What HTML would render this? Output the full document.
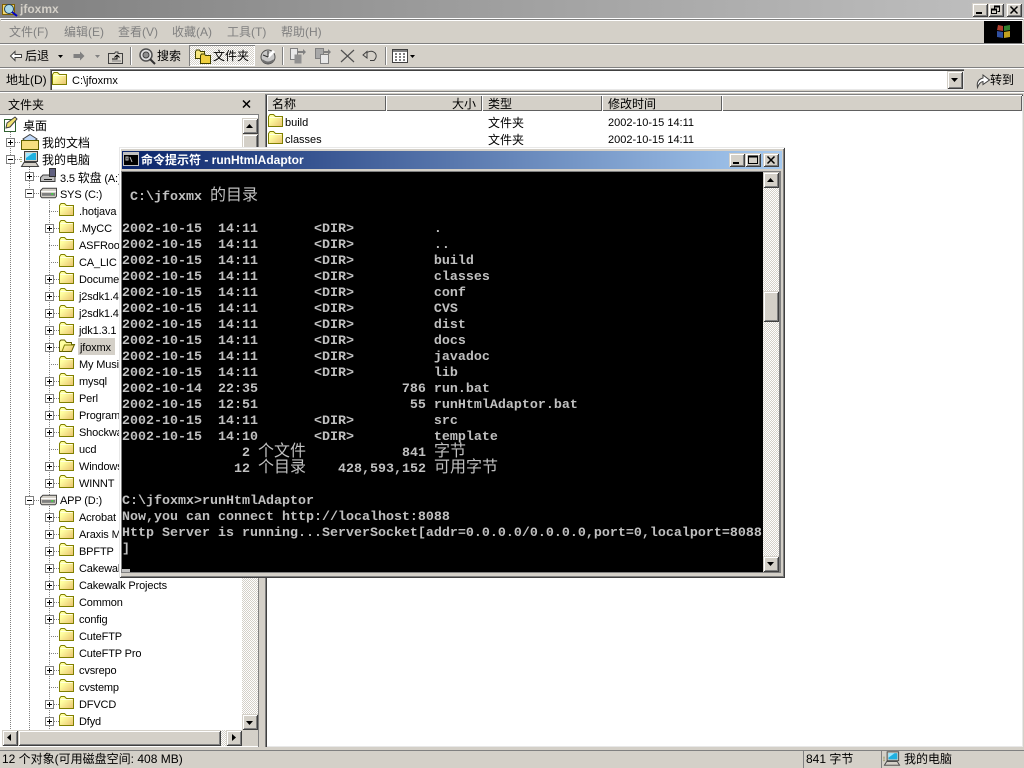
<!DOCTYPE html>
<html><head><meta charset="utf-8"><title>jfoxmx</title>
<style>
html,body{margin:0;padding:0;width:1024px;height:768px;overflow:hidden;background:#d4d0c8}
body{position:relative;font-family:"Liberation Sans","WenQuanYi Zen Hei","Noto Sans CJK SC",sans-serif;font-size:12px;color:#000}
.a,.t{position:absolute}
.t{white-space:nowrap;line-height:16px;height:16px}
svg{position:absolute;overflow:visible}
symbol{overflow:visible}
.up{background:#d4d0c8;box-shadow:inset 1px 1px #d4d0c8,inset -1px -1px #404040,inset 2px 2px #fff,inset -2px -2px #808080}
.hd{background:#d4d0c8;box-shadow:inset 1px 1px #fff,inset -1px -1px #606060;position:absolute;height:16px;top:95px}
.ck{background:repeating-conic-gradient(#fff 0 25%,#d4d0c8 0 50%) 0 0/2px 2px}
.m{color:#808080;top:24px}
.hl{background:#808080}.sh{background:#fff}
.pl{position:absolute;width:9px;height:9px;box-sizing:border-box;border:1px solid #808080;background:#fff}
.pl:before{content:"";position:absolute;left:1px;top:3px;width:5px;height:1px;background:#000}
.pl.p:after{content:"";position:absolute;left:3px;top:1px;width:1px;height:5px;background:#000}
.v{position:absolute;width:1px;background:repeating-linear-gradient(#808080 0 1px,transparent 1px 2px)}
.h{position:absolute;height:1px;background:repeating-linear-gradient(90deg,#808080 0 1px,transparent 1px 2px)}
.t[style*="left:79px"],.t[style*="left:80px"],.t[style*="left:60px"]{margin-top:1px;letter-spacing:-.15px}
pre{position:absolute;left:122px;top:172px;width:641px;height:398px;padding-top:2px;margin:0;background:#000;color:#c0c0c0;font:bold 13.334px/16px "Liberation Mono",monospace;overflow:hidden}
pre span{font:400 16px/0 "WenQuanYi Zen Hei","Noto Sans CJK SC",sans-serif}
</style></head><body>
<svg width="0" height="0" style="position:absolute"><defs>
<linearGradient id="fg" x1="0" y1="0" x2="1" y2="1"><stop offset=".3" stop-color="#ffffa0"/><stop offset="1" stop-color="#e8c070"/></linearGradient>
<symbol id="f" viewBox="0 2 15 14"><path d="M.5 3.500V13.500H14.500V3.500H7.500L5.500 1.500H2L.5 3.500Z" fill="url(#fg)" stroke="#808000"/><path d="M1.500 4.500H13.500" stroke="#ffffe0"/></symbol>
<symbol id="fo" viewBox="0 2 16 14"><path d="M.5 3.500V13.500H12.500L15.500 6.500H12.500V4.500H7.500L5.500 2H2Z" fill="url(#fg)" stroke="#606000"/><path d="M3 13.500L5.500 7H15" fill="none" stroke="#808000"/></symbol>
<symbol id="pc" viewBox="0 0 18 16"><rect x="3.500" y=".5" width="13" height="10" fill="#d4d0c8" stroke="#404040"/><rect x="5" y="2" width="10" height="7" fill="#20b0e0"/><path d="M5 2H12L5 7Z" fill="#a0e8ff"/><path d="M.5 15.500L3 11.500H15L17.500 15.500Z" fill="#d4d0c8" stroke="#404040"/><path d="M0 6V12" stroke="#606000" stroke-dasharray="1 1"/></symbol>
<symbol id="dr" viewBox="0 0 18 12"><path d="M.5 3.500L3 1H17.500V9.500L16 11H2L.5 9.500Z" fill="#d4d0c8" stroke="#404040"/><path d="M1 4.500H17" stroke="#fff"/><rect x="2" y="6" width="14" height="3" fill="#808080"/><rect x="12" y="6" width="2" height="2" fill="#40d040"/></symbol>
</defs></svg>

<!-- main title bar -->
<div class="a" style="left:0;top:0;width:1024px;height:18px;background:linear-gradient(90deg,#808080,#c0c0c0)"></div>
<svg style="left:2px;top:2px" width="16" height="15"><rect x=".5" y="2.500" width="12" height="10" fill="#f0d870" stroke="#806000"/><circle cx="7" cy="7" r="4.500" fill="#a8d8e8" stroke="#204060"/><path d="M10 10L15 14" stroke="#0000c0" stroke-width="2"/></svg>
<div class="t" style="left:20px;top:1px;color:#d4d0c8;font-weight:bold;font-size:12px">jfoxmx</div>
<div class="a up" style="left:972px;top:3px;width:16px;height:14px"></div>
<div class="a" style="left:976px;top:12px;width:6px;height:2px;background:#000"></div>
<div class="a up" style="left:988px;top:3px;width:16px;height:14px"></div>
<svg style="left:988px;top:3px" width="16" height="14"><path d="M6.500 3.500H11.500V8.500H9.500M6.500 3.500V5.500" fill="none" stroke="#000"/><path d="M6 3.500H12" stroke="#000" stroke-width="2"/><rect x="3.500" y="6.500" width="5" height="4" fill="none" stroke="#000"/><path d="M3 6.500H9" stroke="#000" stroke-width="2"/></svg>
<div class="a up" style="left:1006px;top:3px;width:16px;height:14px"></div>
<svg style="left:1006px;top:3px" width="16" height="14"><path d="M4.500 3.500L11.500 10.500M11.500 3.500L4.500 10.500" stroke="#000" stroke-width="1.500"/></svg>
<div class="a" style="left:0;top:18px;width:1024px;height:1px;background:#fff"></div>

<!-- menu -->
<div class="a hl" style="left:1px;top:19px;width:1022px;height:1px"></div>
<div class="a sh" style="left:1px;top:20px;width:1022px;height:1px"></div>
<div class="t m" style="left:9px">文件(F)</div>
<div class="t m" style="left:64px">编辑(E)</div>
<div class="t m" style="left:118px">查看(V)</div>
<div class="t m" style="left:172px">收藏(A)</div>
<div class="t m" style="left:227px">工具(T)</div>
<div class="t m" style="left:281px">帮助(H)</div>
<div class="a" style="left:984px;top:21px;width:38px;height:22px;background:#000"></div>
<svg style="left:995px;top:24px" width="18" height="15"><path d="M3 1L8 2V7L2 6Z" fill="#b04030"/><path d="M9 2L15 1V6L9 7Z" fill="#308030"/><path d="M2 7L8 8V14L2 13Z" fill="#3050a0"/><path d="M9 8L15 7V13L9 14Z" fill="#c0a020"/></svg>
<div class="a hl" style="left:0;top:43px;width:1024px;height:1px"></div>
<div class="a sh" style="left:0;top:44px;width:1024px;height:1px"></div>

<!-- toolbar -->
<svg style="left:9px;top:50px" width="13" height="12"><path d="M6 1.500L1.500 6L6 10.500V7.500H12.500V4.500H6Z" fill="#fff" stroke="#404040"/></svg>
<div class="t" style="left:25px;top:48px">后退</div>
<svg style="left:58px;top:55px" width="6" height="4"><path d="M0 0H5L2.500 3Z" fill="#000"/></svg>
<svg style="left:73px;top:50px" width="13" height="12"><path d="M7 1.500L11.500 6L7 10.500V8H.5V4H7Z" fill="#808080"/></svg>
<svg style="left:95px;top:55px" width="6" height="4"><path d="M0 0H5L2.500 3Z" fill="#808080"/></svg>
<svg style="left:108px;top:50px" width="16" height="14"><path d="M.5 3.500H6.500L7.500 2H10V3.500H14.500V13.500H.5Z" fill="#d4d0c8" stroke="#404040"/><path d="M4 9H9V6M9 5L6.500 7.500M9 5L11.500 7.500" fill="none" stroke="#000"/><path d="M4 11H13" stroke="#808080"/></svg>
<div class="a hl" style="left:130px;top:47px;width:1px;height:18px"></div><div class="a sh" style="left:131px;top:47px;width:1px;height:18px"></div>
<svg style="left:139px;top:48px" width="17" height="17"><circle cx="7" cy="7" r="6" fill="#e0e0e0" stroke="#505050" stroke-width="1.500"/><circle cx="7" cy="7" r="3" fill="#909090" stroke="#404040"/><path d="M11 11L16 16" stroke="#303030" stroke-width="2"/></svg>
<div class="t" style="left:157px;top:48px">搜索</div>
<div class="a ck" style="left:189px;top:45px;width:66px;height:21px;box-shadow:inset 1px 1px #808080,inset -1px -1px #fff"></div>
<svg style="left:195px;top:49px" width="16" height="15"><path d="M.5 2.500L1.500 1H4.500L5.500 2.500H9.500V9.500H.5Z" fill="#f8e880" stroke="#404000"/><path d="M5.500 6.500L6.500 5H9.500L10.500 6.500H15.500V14.500H5.500Z" fill="#f0d040" stroke="#404000"/></svg>
<div class="t" style="left:213px;top:48px">文件夹</div>
<svg style="left:260px;top:48px" width="17" height="17"><circle cx="8" cy="9" r="7" fill="#c8c8c8" stroke="#505050"/><path d="M8 9L14 3" stroke="#fff" stroke-width="3"/><path d="M8 9L3 7M8 9L8 3" stroke="#303030"/><path d="M2 12Q8 17 14 12" stroke="#707070" stroke-width="2" fill="none"/></svg>
<div class="a hl" style="left:282px;top:47px;width:1px;height:18px"></div><div class="a sh" style="left:283px;top:47px;width:1px;height:18px"></div>
<svg style="left:290px;top:48px" width="17" height="16"><rect x=".5" y=".5" width="7" height="11" fill="#e8e8e8" stroke="#808080"/><path d="M4.500 6.500H11.500V15.500H4.500Z" fill="#909090"/><path d="M8 3H13V1L16 4L13 7V5H8Z" fill="#808080"/></svg>
<svg style="left:315px;top:48px" width="17" height="16"><rect x=".5" y=".5" width="8" height="10" fill="#a8a8a8" stroke="#808080"/><rect x="5.500" y="6.500" width="8" height="9" fill="#e8e8e8" stroke="#808080"/><path d="M9 3H13V1L16 4L13 7V5H9Z" fill="#808080"/></svg>
<svg style="left:340px;top:49px" width="15" height="14"><path d="M1 1L14 13M14 1L1 13" stroke="#505050" stroke-width="1.200"/></svg>
<svg style="left:362px;top:50px" width="16" height="12"><path d="M5 2.500Q10 -.5 13.500 3.500Q15.500 7 12 10.500H8" fill="none" stroke="#404040"/><path d="M1 5L5 1.500V8Z" fill="#d4d0c8" stroke="#404040"/></svg>
<div class="a hl" style="left:385px;top:47px;width:1px;height:18px"></div><div class="a sh" style="left:386px;top:47px;width:1px;height:18px"></div>
<svg style="left:392px;top:49px" width="16" height="14"><rect x=".5" y=".5" width="15" height="13" fill="#fff" stroke="#404040"/><rect x="1" y="1" width="14" height="2" fill="#808080"/><path d="M3 5H5M3 8H5M3 11H5M7 5H9M7 8H9M7 11H9M11 5H13M11 8H13M11 11H13" stroke="#000"/></svg>
<svg style="left:410px;top:55px" width="6" height="4"><path d="M0 0H5L2.500 3Z" fill="#000"/></svg>
<div class="a hl" style="left:0;top:67px;width:1024px;height:1px"></div>
<div class="a sh" style="left:0;top:68px;width:1024px;height:1px"></div>

<!-- address -->
<div class="t" style="left:6px;top:72px">地址(D)</div>
<div class="a" style="left:50px;top:69px;width:914px;height:21px;background:#fff;box-shadow:inset 1px 1px #808080,inset 2px 2px #404040,inset -1px -1px #e8e8e8"></div>
<svg style="left:52px;top:73px" width="15" height="14"><use href="#f" width="15" height="14"/></svg>
<div class="t" style="left:72px;top:73px;font-size:11px">C:\jfoxmx</div>
<div class="a up" style="left:947px;top:71px;width:16px;height:18px"></div>
<svg style="left:951px;top:78px" width="8" height="5"><path d="M0 0H7L3.500 4Z" fill="#000"/></svg>
<svg style="left:975px;top:72px" width="16" height="17"><path d="M2.500 15.500Q1 8 8 6V3L14.500 8L8 12.500V9.500Q4.500 10 2.500 15.500Z" fill="#fff" stroke="#404040"/></svg>
<div class="t" style="left:990px;top:72px">转到</div>
<div class="a hl" style="left:0;top:91px;width:1024px;height:1px"></div>
<div class="a sh" style="left:0;top:92px;width:1024px;height:1px"></div>

<!-- left pane -->
<div class="t" style="left:8px;top:97px">文件夹</div>
<svg style="left:242px;top:100px" width="9" height="8"><path d="M1 0.500L8 7.500M8 0.500L1 7.500" stroke="#000" stroke-width="1.500"/></svg>
<div class="a" style="left:0;top:114px;width:259px;height:633px;background:#fff;box-shadow:inset 0 1px #808080,inset -1px 0 #808080"></div>
<div class="v" style="left:10px;top:130px;height:600px"></div>
<div class="v" style="left:29px;top:165px;height:565px"></div>
<div class="v" style="left:49px;top:200px;height:530px"></div>

<svg style="left:2px;top:116px" width="17" height="17"><path d="M2.500 3.500H13.500V15.500H2.500Z" fill="#fff" stroke="#306030"/><path d="M5 7L13 1L15 3L8 11L4 12Z" fill="#f0e070" stroke="#404040"/></svg>
<div class="t" style="left:23px;top:118px">桌面</div>
<div class="h" style="left:15px;top:142px;width:6px"></div><div class="pl p" style="left:6px;top:138px"></div>
<svg style="left:21px;top:134px" width="18" height="16"><path d="M9 .5L16 5L12 8H5L2 5Z" fill="#c0d8f8" stroke="#404040"/><path d="M.5 6.500H17.500V15.500H.5Z" fill="#f8e080" stroke="#606000"/></svg>
<div class="t" style="left:42px;top:135px">我的文档</div>
<div class="h" style="left:15px;top:159px;width:6px"></div><div class="pl" style="left:6px;top:155px"></div>
<svg style="left:21px;top:151px" width="18" height="16"><use href="#pc" width="18" height="16"/></svg>
<div class="t" style="left:42px;top:152px">我的电脑</div>

<div class="h" style="left:34px;top:176px;width:6px"></div><div class="pl p" style="left:25px;top:172px"></div>
<svg style="left:40px;top:168px" width="17" height="16"><path d="M.5 9.500L3 7H15V13.500H.5Z" fill="#c0c0c0" stroke="#404040"/><rect x="9.500" y=".5" width="6" height="8" fill="#606080" stroke="#303030"/><rect x="4" y="11" width="8" height="1" fill="#202020"/></svg>
<div class="t" style="left:60px;top:169px;font-size:11px">3.5 <span style="font-size:12px">软盘</span> (A:)</div>
<div class="h" style="left:34px;top:193px;width:6px"></div><div class="pl" style="left:25px;top:189px"></div>
<svg style="left:40px;top:187px" width="17" height="12"><use href="#dr" width="17" height="12"/></svg>
<div class="t" style="left:60px;top:186px;font-size:11px">SYS (C:)</div>

<!-- level 3 rows SYS -->
<div class="h" style="left:49px;top:211px;width:10px"></div><svg style="left:59px;top:204px" width="15" height="14"><use href="#f" width="15" height="14"/></svg><div class="t" style="left:79px;top:203px;font-size:11px">.hotjava</div>
<div class="h" style="left:54px;top:228px;width:5px"></div><div class="pl p" style="left:45px;top:224px"></div><svg style="left:59px;top:221px" width="15" height="14"><use href="#f" width="15" height="14"/></svg><div class="t" style="left:79px;top:220px;font-size:11px">.MyCC</div>
<div class="h" style="left:49px;top:245px;width:10px"></div><svg style="left:59px;top:238px" width="15" height="14"><use href="#f" width="15" height="14"/></svg><div class="t" style="left:79px;top:237px;font-size:11px">ASFRoot</div>
<div class="h" style="left:49px;top:262px;width:10px"></div><svg style="left:59px;top:255px" width="15" height="14"><use href="#f" width="15" height="14"/></svg><div class="t" style="left:79px;top:254px;font-size:11px">CA_LIC</div>
<div class="h" style="left:54px;top:279px;width:5px"></div><div class="pl p" style="left:45px;top:275px"></div><svg style="left:59px;top:272px" width="15" height="14"><use href="#f" width="15" height="14"/></svg><div class="t" style="left:79px;top:271px;font-size:11px">Documents</div>
<div class="h" style="left:54px;top:296px;width:5px"></div><div class="pl p" style="left:45px;top:292px"></div><svg style="left:59px;top:289px" width="15" height="14"><use href="#f" width="15" height="14"/></svg><div class="t" style="left:79px;top:288px;font-size:11px">j2sdk1.4</div>
<div class="h" style="left:54px;top:313px;width:5px"></div><div class="pl p" style="left:45px;top:309px"></div><svg style="left:59px;top:306px" width="15" height="14"><use href="#f" width="15" height="14"/></svg><div class="t" style="left:79px;top:305px;font-size:11px">j2sdk1.4</div>
<div class="h" style="left:54px;top:330px;width:5px"></div><div class="pl p" style="left:45px;top:326px"></div><svg style="left:59px;top:323px" width="15" height="14"><use href="#f" width="15" height="14"/></svg><div class="t" style="left:79px;top:322px;font-size:11px">jdk1.3.1</div>
<div class="h" style="left:54px;top:347px;width:5px"></div><div class="pl p" style="left:45px;top:343px"></div><svg style="left:59px;top:340px" width="16" height="14"><use href="#fo" width="16" height="14"/></svg><div class="a" style="left:78px;top:338px;width:37px;height:17px;background:#d4d0c8"></div><div class="t" style="left:80px;top:339px;font-size:11px">jfoxmx</div>
<div class="h" style="left:49px;top:364px;width:10px"></div><svg style="left:59px;top:357px" width="15" height="14"><use href="#f" width="15" height="14"/></svg><div class="t" style="left:79px;top:356px;font-size:11px">My Music</div>
<div class="h" style="left:54px;top:381px;width:5px"></div><div class="pl p" style="left:45px;top:377px"></div><svg style="left:59px;top:374px" width="15" height="14"><use href="#f" width="15" height="14"/></svg><div class="t" style="left:79px;top:373px;font-size:11px">mysql</div>
<div class="h" style="left:54px;top:398px;width:5px"></div><div class="pl p" style="left:45px;top:394px"></div><svg style="left:59px;top:391px" width="15" height="14"><use href="#f" width="15" height="14"/></svg><div class="t" style="left:79px;top:390px;font-size:11px">Perl</div>
<div class="h" style="left:54px;top:415px;width:5px"></div><div class="pl p" style="left:45px;top:411px"></div><svg style="left:59px;top:408px" width="15" height="14"><use href="#f" width="15" height="14"/></svg><div class="t" style="left:79px;top:407px;font-size:11px">Program</div>
<div class="h" style="left:54px;top:432px;width:5px"></div><div class="pl p" style="left:45px;top:428px"></div><svg style="left:59px;top:425px" width="15" height="14"><use href="#f" width="15" height="14"/></svg><div class="t" style="left:79px;top:424px;font-size:11px">Shockwave</div>
<div class="h" style="left:49px;top:449px;width:10px"></div><svg style="left:59px;top:442px" width="15" height="14"><use href="#f" width="15" height="14"/></svg><div class="t" style="left:79px;top:441px;font-size:11px">ucd</div>
<div class="h" style="left:54px;top:466px;width:5px"></div><div class="pl p" style="left:45px;top:462px"></div><svg style="left:59px;top:459px" width="15" height="14"><use href="#f" width="15" height="14"/></svg><div class="t" style="left:79px;top:458px;font-size:11px">Windows</div>
<div class="h" style="left:54px;top:483px;width:5px"></div><div class="pl p" style="left:45px;top:479px"></div><svg style="left:59px;top:476px" width="15" height="14"><use href="#f" width="15" height="14"/></svg><div class="t" style="left:79px;top:475px;font-size:11px">WINNT</div>

<div class="h" style="left:34px;top:500px;width:6px"></div><div class="pl" style="left:25px;top:496px"></div>
<svg style="left:40px;top:494px" width="17" height="12"><use href="#dr" width="17" height="12"/></svg>
<div class="t" style="left:60px;top:492px;font-size:11px">APP (D:)</div>

<div class="h" style="left:54px;top:517px;width:5px"></div><div class="pl p" style="left:45px;top:513px"></div><svg style="left:59px;top:510px" width="15" height="14"><use href="#f" width="15" height="14"/></svg><div class="t" style="left:79px;top:509px;font-size:11px">Acrobat</div>
<div class="h" style="left:54px;top:534px;width:5px"></div><div class="pl p" style="left:45px;top:530px"></div><svg style="left:59px;top:527px" width="15" height="14"><use href="#f" width="15" height="14"/></svg><div class="t" style="left:79px;top:526px;font-size:11px">Araxis M</div>
<div class="h" style="left:54px;top:551px;width:5px"></div><div class="pl p" style="left:45px;top:547px"></div><svg style="left:59px;top:544px" width="15" height="14"><use href="#f" width="15" height="14"/></svg><div class="t" style="left:79px;top:543px;font-size:11px">BPFTP</div>
<div class="h" style="left:54px;top:568px;width:5px"></div><div class="pl p" style="left:45px;top:564px"></div><svg style="left:59px;top:561px" width="15" height="14"><use href="#f" width="15" height="14"/></svg><div class="t" style="left:79px;top:560px;font-size:11px">Cakewalk</div>
<div class="h" style="left:54px;top:585px;width:5px"></div><div class="pl p" style="left:45px;top:581px"></div><svg style="left:59px;top:578px" width="15" height="14"><use href="#f" width="15" height="14"/></svg><div class="t" style="left:79px;top:577px;font-size:11px">Cakewalk Projects</div>
<div class="h" style="left:54px;top:602px;width:5px"></div><div class="pl p" style="left:45px;top:598px"></div><svg style="left:59px;top:595px" width="15" height="14"><use href="#f" width="15" height="14"/></svg><div class="t" style="left:79px;top:594px;font-size:11px">Common</div>
<div class="h" style="left:54px;top:619px;width:5px"></div><div class="pl p" style="left:45px;top:615px"></div><svg style="left:59px;top:612px" width="15" height="14"><use href="#f" width="15" height="14"/></svg><div class="t" style="left:79px;top:611px;font-size:11px">config</div>
<div class="h" style="left:49px;top:636px;width:10px"></div><svg style="left:59px;top:629px" width="15" height="14"><use href="#f" width="15" height="14"/></svg><div class="t" style="left:79px;top:628px;font-size:11px">CuteFTP</div>
<div class="h" style="left:49px;top:653px;width:10px"></div><svg style="left:59px;top:646px" width="15" height="14"><use href="#f" width="15" height="14"/></svg><div class="t" style="left:79px;top:645px;font-size:11px">CuteFTP Pro</div>
<div class="h" style="left:54px;top:670px;width:5px"></div><div class="pl p" style="left:45px;top:666px"></div><svg style="left:59px;top:663px" width="15" height="14"><use href="#f" width="15" height="14"/></svg><div class="t" style="left:79px;top:662px;font-size:11px">cvsrepo</div>
<div class="h" style="left:49px;top:687px;width:10px"></div><svg style="left:59px;top:680px" width="15" height="14"><use href="#f" width="15" height="14"/></svg><div class="t" style="left:79px;top:679px;font-size:11px">cvstemp</div>
<div class="h" style="left:54px;top:704px;width:5px"></div><div class="pl p" style="left:45px;top:700px"></div><svg style="left:59px;top:697px" width="15" height="14"><use href="#f" width="15" height="14"/></svg><div class="t" style="left:79px;top:696px;font-size:11px">DFVCD</div>
<div class="h" style="left:54px;top:721px;width:5px"></div><div class="pl p" style="left:45px;top:717px"></div><svg style="left:59px;top:714px" width="15" height="14"><use href="#f" width="15" height="14"/></svg><div class="t" style="left:79px;top:713px;font-size:11px">Dfyd</div>

<!-- tree scrollbars -->
<div class="a ck" style="left:242px;top:134px;width:16px;height:580px"></div>
<div class="a up" style="left:242px;top:134px;width:16px;height:40px"></div>
<div class="a up" style="left:242px;top:118px;width:16px;height:16px"></div>
<svg style="left:246px;top:124px" width="8" height="5"><path d="M0 4H7L3.500 0Z" fill="#000"/></svg>
<div class="a up" style="left:242px;top:714px;width:16px;height:16px"></div>
<svg style="left:246px;top:721px" width="8" height="5"><path d="M0 0H7L3.500 4Z" fill="#000"/></svg>
<div class="a" style="left:2px;top:730px;width:256px;height:16px;background:#d4d0c8"></div>
<div class="a ck" style="left:18px;top:730px;width:224px;height:16px"></div>
<div class="a up" style="left:2px;top:730px;width:16px;height:16px"></div>
<svg style="left:7px;top:734px" width="5" height="8"><path d="M4 0V7L0 3.500Z" fill="#000"/></svg>
<div class="a up" style="left:18px;top:730px;width:203px;height:16px"></div>
<div class="a up" style="left:226px;top:730px;width:16px;height:16px"></div>
<svg style="left:232px;top:734px" width="5" height="8"><path d="M0 0V7L4 3.500Z" fill="#000"/></svg>

<!-- right pane -->
<div class="a" style="left:265px;top:94px;width:758px;height:653px;background:#fff;box-shadow:inset 1px 1px #808080,inset 2px 2px #404040,inset -1px -1px #e8e8e8"></div>
<div class="hd" style="left:267px;width:119px"></div><div class="t" style="left:272px;top:96px">名称</div>
<div class="hd" style="left:386px;width:96px"></div><div class="t" style="left:452px;top:96px">大小</div>
<div class="hd" style="left:482px;width:120px"></div><div class="t" style="left:488px;top:96px">类型</div>
<div class="hd" style="left:602px;width:120px"></div><div class="t" style="left:608px;top:96px">修改时间</div>
<div class="hd" style="left:722px;width:300px"></div>
<svg style="left:268px;top:115px" width="15" height="14"><use href="#f" width="15" height="14"/></svg>
<div class="t" style="left:285px;top:115px;font-size:11px">build</div>
<div class="t" style="left:488px;top:115px">文件夹</div>
<div class="t" style="left:608px;top:115px;font-size:11px">2002-10-15 14:11</div>
<svg style="left:268px;top:132px" width="15" height="14"><use href="#f" width="15" height="14"/></svg>
<div class="t" style="left:285px;top:132px;font-size:11px">classes</div>
<div class="t" style="left:488px;top:132px">文件夹</div>
<div class="t" style="left:608px;top:132px;font-size:11px">2002-10-15 14:11</div>

<!-- status -->
<div class="a hl" style="left:0;top:750px;width:1024px;height:1px"></div>
<div class="t" style="left:2px;top:751px">12 个对象(可用磁盘空间: 408 MB)</div>
<div class="a" style="left:803px;top:750px;width:76px;height:18px;box-shadow:inset 1px 0 #808080"></div>
<div class="t" style="left:806px;top:751px">841 字节</div>
<div class="a" style="left:881px;top:750px;width:143px;height:18px;box-shadow:inset 1px 0 #808080"></div>
<svg style="left:884px;top:751px" width="16" height="15"><use href="#pc" width="16" height="15"/></svg>
<div class="t" style="left:904px;top:751px">我的电脑</div>

<!-- console window -->
<div class="a" style="left:119px;top:147px;width:666px;height:431px;background:#d4d0c8;box-shadow:inset 1px 1px #e8e8e8,inset -1px -1px #404040,inset 2px 2px #fff,inset -2px -2px #808080"></div>
<div class="a" style="left:122px;top:151px;width:660px;height:18px;background:linear-gradient(90deg,#0a246a,#a6caf0)"></div>
<svg style="left:123px;top:152px" width="16" height="14"><rect x=".5" y=".5" width="15" height="13" fill="#000" stroke="#c0c0c0"/><rect x="1" y="1" width="14" height="2" fill="#c0c0c0"/><path d="M3 5H5V8H3ZM7 5L9 10" stroke="#c0c0c0" fill="none"/></svg>
<div class="t" style="left:141px;top:152px;color:#fff;font-weight:bold;font-size:12px">命令提示符 - runHtmlAdaptor</div>
<div class="a up" style="left:729px;top:153px;width:16px;height:14px"></div>
<div class="a" style="left:733px;top:162px;width:6px;height:2px;background:#000"></div>
<div class="a up" style="left:745px;top:153px;width:16px;height:14px"></div>
<svg style="left:745px;top:153px" width="16" height="14"><rect x="3.500" y="3.500" width="9" height="7" fill="none" stroke="#000"/><path d="M3 3.500H13" stroke="#000" stroke-width="2"/></svg>
<div class="a up" style="left:763px;top:153px;width:16px;height:14px"></div>
<svg style="left:763px;top:153px" width="16" height="14"><path d="M4.500 3.500L11.500 10.500M11.500 3.500L4.500 10.500" stroke="#000" stroke-width="1.500"/></svg>
<div class="a" style="left:121px;top:171px;width:660px;height:402px;background:#808080"></div>
<pre>

 C:\jfoxmx <span>的目录</span>

2002-10-15  14:11       &lt;DIR&gt;          .
2002-10-15  14:11       &lt;DIR&gt;          ..
2002-10-15  14:11       &lt;DIR&gt;          build
2002-10-15  14:11       &lt;DIR&gt;          classes
2002-10-15  14:11       &lt;DIR&gt;          conf
2002-10-15  14:11       &lt;DIR&gt;          CVS
2002-10-15  14:11       &lt;DIR&gt;          dist
2002-10-15  14:11       &lt;DIR&gt;          docs
2002-10-15  14:11       &lt;DIR&gt;          javadoc
2002-10-15  14:11       &lt;DIR&gt;          lib
2002-10-14  22:35                  786 run.bat
2002-10-15  12:51                   55 runHtmlAdaptor.bat
2002-10-15  14:11       &lt;DIR&gt;          src
2002-10-15  14:10       &lt;DIR&gt;          template
               2 <span>个文件</span>            841 <span>字节</span>
              12 <span>个目录</span>    428,593,152 <span>可用字节</span>

C:\jfoxmx&gt;runHtmlAdaptor
Now,you can connect http://localhost:8088
Http Server is running...ServerSocket[addr=0.0.0.0/0.0.0.0,port=0,localport=8088
]</pre>
<div class="a" style="left:122px;top:569px;width:8px;height:3px;background:#c0c0c0"></div>
<div class="a ck" style="left:763px;top:172px;width:16px;height:400px"></div>
<div class="a up" style="left:763px;top:172px;width:16px;height:16px"></div>
<svg style="left:767px;top:178px" width="8" height="5"><path d="M0 4H7L3.500 0Z" fill="#000"/></svg>
<div class="a up" style="left:763px;top:291px;width:16px;height:31px"></div>
<div class="a up" style="left:763px;top:556px;width:16px;height:16px"></div>
<svg style="left:767px;top:562px" width="8" height="5"><path d="M0 0H7L3.500 4Z" fill="#000"/></svg>
</body></html>
